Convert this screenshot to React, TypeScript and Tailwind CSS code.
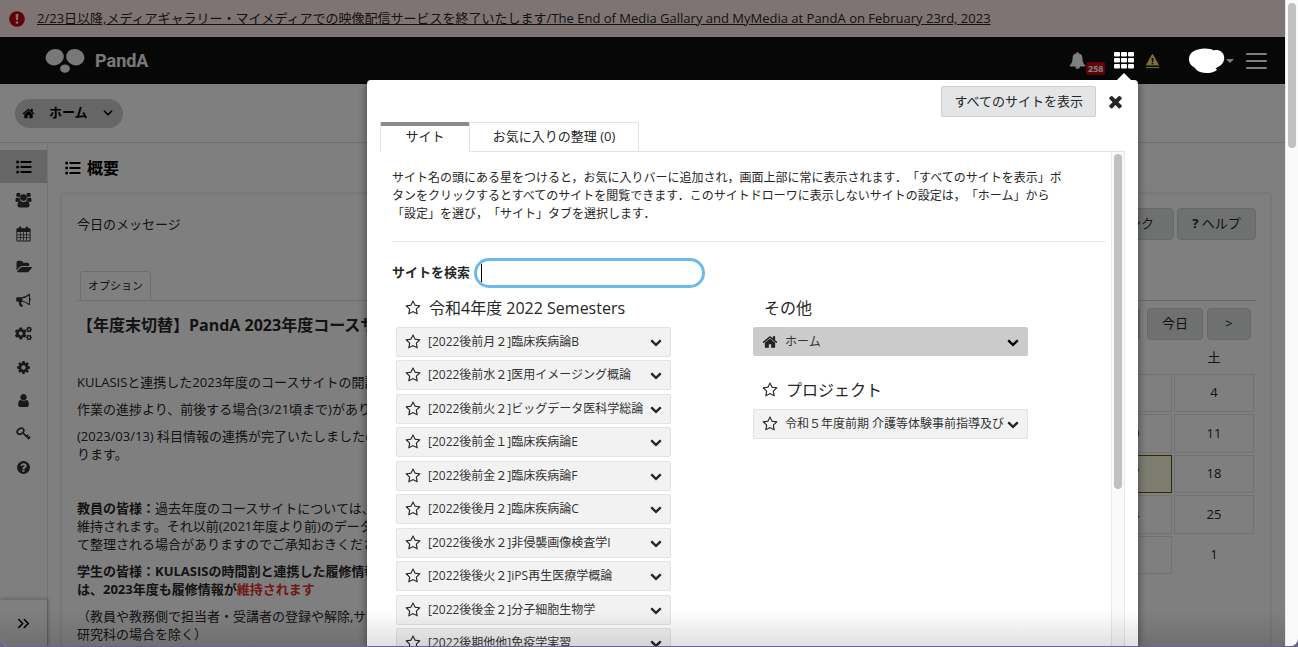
import { useState } from 'react'
import type { ReactNode } from 'react'
import { FaCogs } from 'react-icons/fa'
import { ChevronDown, ChevronsRight } from 'lucide-react'

const PATHS = {
  home: 'M1472 992v480q0 26-19 45t-45 19h-384v-384h-256v384h-384q-26 0-45-19t-19-45v-480q0-1 .5-3t.5-3l575-474 575 474q1 2 1 6zm223-69l-62 74q-8 9-21 11h-3q-13 0-21-7l-692-577-692 577q-12 8-24 7-13-2-21-11l-62-74q-8-10-7-23.5t11-21.5l719-599q32-26 76-26t76 26l244 204v-195q0-14 9-23t23-9h192q14 0 23 9t9 23v408l219 182q10 8 11 21.5t-7 23.5z',
  chevron:
    'M1683 808l-742 741q-19 19-45 19t-45-19l-742-741q-19-19-19-45.5t19-45.5l166-165q19-19 45-19t45 19l531 531 531-531q19-19 45-19t45 19l166 165q19 19 19 45.5t-19 45.5z',
  star: 'M1201 1004l306-297-422-62-189-382-189 382-422 62 306 297-73 421 378-199 377 199zm527-357q0 22-26 48l-363 354 86 500q1 7 1 20 0 50-41 50-19 0-40-12l-449-236-449 236q-22 12-40 12-21 0-31.5-14.5t-10.5-35.5q0-6 2-20l86-500-364-354q-25-27-25-48 0-37 56-46l502-73 225-455q19-41 49-41t49 41l225 455 502 73q56 9 56 46z',
  times:
    'M1490 1322q0 40-28 68l-136 136q-28 28-68 28t-68-28l-294-294-294 294q-28 28-68 28t-68-28l-136-136q-28-28-28-68t28-68l294-294-294-294q-28-28-28-68t28-68l136-136q28-28 68-28t68 28l294 294 294-294q28-28 68-28t68 28l136 136q28 28 28 68t-28 68l-294 294 294 294q28 28 28 68z',
  bell: 'M912 1696q0-16-16-16-59 0-101.5-42.5t-42.5-101.5q0-16-16-16t-16 16q0 73 51.5 124.5t124.5 51.5q16 0 16-16zm816-288q0 52-38 90t-90 38h-448q0 106-75 181t-181 75-181-75-75-181h-448q-52 0-90-38t-38-90q50-42 91-88t85-119.5 74.5-158.5 50-206 19.5-260q0-152 117-282.5t307-158.5q-8-19-8-39 0-40 28-68t68-28 68 28 28 68q0 20-8 39 190 28 307 158.5t117 282.5q0 139 19.5 260t50 206 74.5 158.5 85 119.5 91 88z',
  user: 'M1536 1399q0 109-62.5 187t-150.5 78h-854q-88 0-150.5-78t-62.5-187q0-85 8.5-160.5t31.5-152 58.5-131 94-89 134.5-34.5q131 128 313 128t313-128q76 0 134.5 34.5t94 89 58.5 131 31.5 152 8.5 160.5zm-256-887q0 159-112.5 271.5t-271.5 112.5-271.5-112.5-112.5-271.5 112.5-271.5 271.5-112.5 271.5 112.5 112.5 271.5z',
  cog: 'M1152 896q0-106-75-181t-181-75-181 75-75 181 75 181 181 75 181-75 75-181zm512-109v222q0 12-8 23t-20 13l-185 28q-19 54-39 91 35 50 107 138 10 12 10 25t-9 23q-27 37-99 108t-94 71q-12 0-26-9l-138-108q-44 23-91 38-16 136-29 186-7 28-36 28h-222q-14 0-24.5-8.5t-11.5-21.5l-28-184q-49-16-90-37l-141 107q-10 9-25 9-14 0-25-11-126-114-165-168-7-10-7-23 0-12 8-23 15-21 51-66.5t54-70.5q-27-50-41-99l-183-27q-13-2-21-12.5t-8-23.5v-222q0-12 8-23t19-13l186-28q14-46 39-92-40-57-107-138-10-12-10-24 0-10 9-23 26-36 98.5-107.5t94.5-71.5q13 0 26 10l138 107q44-23 91-38 16-136 29-186 7-28 36-28h222q14 0 24.5 8.5t11.5 21.5l28 184q49 16 90 37l142-107q9-9 24-9 13 0 25 10 129 119 165 170 7 8 7 22 0 12-8 23-15 21-51 66.5t-54 70.5q26 50 41 98l183 28q13 2 21 12.5t8 23.5z',
  question:
    'M1024 1376v-192q0-14-9-23t-23-9h-192q-14 0-23 9t-9 23v192q0 14 9 23t23 9h192q14 0 23-9t9-23zm256-672q0-88-55.5-163t-138.5-116-170-41q-243 0-371 213-15 24 8 42l132 100q7 6 19 6 16 0 25-12 53-68 86-92 34-24 86-24 48 0 85.5 26t37.5 59q0 38-20 61t-68 45q-63 28-115.5 86.5t-52.5 125.5v36q0 14 9 23t23 9h192q14 0 23-9t9-23q0-19 21.5-49.5t54.5-49.5q32-18 49-28.5t46-35 44.5-48 28-60.5 12.5-81zm384 192q0 209-103 385.5t-279.5 279.5-385.5 103-385.5-103-279.5-279.5-103-385.5 103-385.5 279.5-279.5 385.5-103 385.5 103 279.5 279.5 103 385.5z',
  folder:
    'M1943 952q0 31-31 66l-336 396q-43 51-120.5 86.5t-143.5 35.5h-1088q-34 0-60.5-13t-26.5-43q0-31 31-66l336-396q43-51 120.5-86.5t143.5-35.5h1088q34 0 60.5 13t26.5 43zm-343-344v160h-832q-94 0-197 47.5t-164 119.5l-337 396-5 6q0-4-.5-12.5t-.5-12.5v-960q0-92 66-158t158-66h320q92 0 158 66t66 158v32h544q92 0 158 66t66 158z',
}

function Icon({ name, size, className }: { name: keyof typeof PATHS; size: number; className?: string }) {
  return (
    <svg
      width={size}
      height={size}
      viewBox={name === 'folder' ? '0 0 1943 1792' : '0 0 1792 1792'}
      fill="currentColor"
      className={className}
      aria-hidden="true"
    >
      <path d={PATHS[name]} />
    </svg>
  )
}

function ListIcon() {
  return (
    <svg width="16" height="14" viewBox="0 0 16 14" fill="currentColor" aria-hidden="true">
      {[2, 7, 12].map((y) => (
        <g key={y}>
          <circle cx="1.6" cy={y} r="1.5" />
          <rect x="4.5" y={y - 1} width="11" height="2" rx="0.4" />
        </g>
      ))}
    </svg>
  )
}

function UsersIcon() {
  return (
    <svg width="17" height="16" viewBox="0 0 17 16" fill="currentColor" aria-hidden="true">
      <circle cx="3.4" cy="2.9" r="2.2" />
      <circle cx="13.6" cy="2.9" r="2.2" />
      <circle cx="8.5" cy="5.6" r="3.3" />
      <path d="M1.8 5.4q1.6 1 3 .2q-.3 2 .8 3.3q-1.500.1-2.300 1H1.800Q.4 9.900.4 8.600q0-2.800 1.400-3.200zM15.200 5.400q-1.600 1-3 .2q.3 2-.8 3.300q1.500.1 2.300 1h1.500q1.400 0 1.400-1.300q0-2.800-1.400-3.200z" />
      <path d="M5.200 9q3.300 2.300 6.600 0q2.700.3 2.700 4.600q0 2-2 2h-8q-2 0-2-2q0-4.300 2.700-4.600z" />
    </svg>
  )
}

function CalendarIcon() {
  return (
    <svg width="15" height="16" viewBox="0 0 15 16" aria-hidden="true">
      <path
        fill="currentColor"
        fillRule="evenodd"
        d="M1.400 2.200h1.400V1.500Q2.800.4 3.900.4h.3q1.100 0 1.100 1.100v.7h4.400v-.7q0-1.100 1.100-1.100h.3q1.100 0 1.100 1.100v.7h1.400q1 0 1 1v11.200q0 1-1 1H1.400q-1 0-1-1V3.200q0-1 1-1zM1.400 6v8.400h12.200V6z"
      />
      <path d="M4.500 6v8.400M7.500 6v8.400M10.500 6v8.400M1.400 8.800h12.200M1.400 11.600h12.200" stroke="currentColor" strokeWidth="0.8" />
    </svg>
  )
}

function BullhornIcon() {
  return (
    <svg width="15" height="14" viewBox="0 0 15 14" fill="currentColor" aria-hidden="true">
      <path
        fillRule="evenodd"
        d="M14 5.200q.9.300.9 1.200T14 7.600v3.600q0 1-1 1Q9.700 9.200 6 8.800q-1 .4-.7 1.300q-.5.800.8 1.700q.3.500 1 .9q-.7 1.200-2.300.9q-1-.2-1.300-1Q2.500 10.500 3 8.700H1.500Q.2 8.700.2 7.400V5.600q0-1.300 1.300-1.300H5.300Q9.300 4.200 13 .8q1 0 1 1zM12.900 2.400Q9.800 5 6.400 5.300v2.400q3.500.4 6.500 3z"
      />
    </svg>
  )
}

function KeyIcon() {
  return (
    <svg width="15" height="14" viewBox="0 0 15 14" fill="none" stroke="currentColor" aria-hidden="true">
      <ellipse cx="4.500" cy="4.200" rx="3.600" ry="2.600" transform="rotate(-35 4.500 4.200)" strokeWidth="1.700" />
      <path d="M6.500 5.600L13.400 12.200M10.300 9.800l2-2M12.200 11.600l1.900-1.900" strokeWidth="1.800" />
    </svg>
  )
}

const TOOLS: { label: string; icon: ReactNode }[] = [
  { label: '概要', icon: <ListIcon /> },
  { label: '名簿', icon: <UsersIcon /> },
  { label: 'カレンダー', icon: <CalendarIcon /> },
  { label: 'リソース', icon: <Icon name="folder" size={16} /> },
  { label: 'お知らせ', icon: <BullhornIcon /> },
  { label: 'サイトセットアップ', icon: <FaCogs size={17} /> },
  { label: '個人設定', icon: <Icon name="cog" size={15} /> },
  { label: 'アカウント', icon: <Icon name="user" size={15} /> },
  { label: '参加登録', icon: <KeyIcon /> },
  { label: 'ヘルプ', icon: <Icon name="question" size={15} /> },
]

const SITES = [
  '[2022後前月２]臨床疾病論B',
  '[2022後前水２]医用イメージング概論',
  '[2022後前火２]ビッグデータ医科学総論',
  '[2022後前金１]臨床疾病論E',
  '[2022後前金２]臨床疾病論F',
  '[2022後後月２]臨床疾病論C',
  '[2022後後水２]非侵襲画像検査学I',
  '[2022後後火２]iPS再生医療学概論',
  '[2022後後金２]分子細胞生物学',
  '[2022後期他他]免疫学実習',
]

const WEEKS = [
  [3, 4],
  [10, 11],
  [17, 18],
  [24, 25],
  [31, 1],
]

function Header() {
  return (
    <header className="flex h-[47px] shrink-0 items-center bg-[#0e0e0e] pr-[18px] pl-[45px] text-white">
      <a href="#" className="flex items-center gap-[10px]">
        <svg width="40" height="26" viewBox="0 0 40 26" fill="#f0f0f0" aria-hidden="true">
          <ellipse cx="9.700" cy="9.200" rx="9.200" ry="8.100" transform="rotate(-20 9.700 9.200)" />
          <ellipse cx="30.300" cy="9.200" rx="9.200" ry="8.100" transform="rotate(20 30.300 9.200)" />
          <ellipse cx="20" cy="20.600" rx="4.900" ry="4.200" />
        </svg>
        <span className="font-['Roboto',sans-serif] text-lg font-bold text-[#f0f0f0]">PandA</span>
      </a>

      <div className="ml-auto flex h-full items-center">
        <button type="button" aria-label="通知" className="relative mr-7">
          <Icon name="bell" size={17} />
          <span className="absolute top-[10px] left-[17px] rounded-xs bg-[#c4000a] px-[2px] text-[9px] leading-[13px] font-bold">
            258
          </span>
        </button>
        <button type="button" aria-label="サイト一覧" className="relative z-20 mr-3">
          <svg width="20" height="17" viewBox="0 0 20 17" fill="currentColor" aria-hidden="true">
            {[0, 7, 14].map((x) =>
              [0, 6, 12].map((y) => <rect key={`${x}-${y}`} x={x} y={y} width="6" height="4.600" rx="1" />),
            )}
          </svg>
        </button>
        <a href="#" aria-label="警告" className="mr-[30px] text-[#f2dc78]">
          <svg width="13" height="16" viewBox="0 0 13 16" aria-hidden="true">
            <path
              d="M5.700 1.700q.8-1.300 1.600 0l5.400 9.800q.5 1.100-.7 1.100H1q-1.200 0-.7-1.100z"
              fill="currentColor"
            />
            <path d="M5.600 5h1.800l-.3 4H5.900zM5.700 9.800h1.600v1.500H5.700z" fill="#0e0e0e" />
            <path d="M0 14.600h13" stroke="currentColor" />
          </svg>
        </a>
        <button type="button" aria-label="アカウント" className="mr-3 flex items-center gap-px">
          <svg width="36" height="26" viewBox="0 0 36 26" fill="#fff" className="relative z-20" aria-hidden="true">
            <path d="M0 11.500C-.2 6 4 2.500 9 1.500C15-.2 21 .4 25 2.400C30 1.200 34 4 35 8C36 13 33 17 29 19L26.500 20.500Q29.500 22 26 23.200C21 25.800 12 25.800 8 22.600L5.500 19.500C2 18 0 15 0 11.500z" />
          </svg>
          <svg width="8" height="4" viewBox="0 0 8 4" fill="currentColor" aria-hidden="true">
            <path d="M0 0h8L4 4z" />
          </svg>
        </button>
        <button type="button" aria-label="メニュー" className="flex flex-col gap-[5px]">
          <span className="h-[2px] w-[21px] rounded-xs bg-white" />
          <span className="h-[2px] w-[21px] rounded-xs bg-white" />
          <span className="h-[2px] w-[21px] rounded-xs bg-white" />
        </button>
      </div>
    </header>
  )
}

function Sidebar() {
  return (
    <nav className="flex w-12 shrink-0 flex-col border-r border-[#e4e4e4] pt-[7px]">
      <ul className="flex h-[334px] flex-col">
        {TOOLS.map((tool, i) => (
          <li key={tool.label} className="flex-1">
            <a
              href="#"
              aria-label={tool.label}
              className={
                i === 0
                  ? 'flex h-full items-center justify-center bg-[#ccc] text-black'
                  : 'flex h-full items-center justify-center text-[#333]'
              }
            >
              {tool.icon}
            </a>
          </li>
        ))}
      </ul>
      <button
        type="button"
        aria-label="メニューを展開"
        className="mt-auto flex h-[47px] items-center justify-center border-t border-[#ddd] text-black shadow-[1px_0_4px_rgba(0,0,0,0.3)]"
      >
        <ChevronsRight size={19} />
      </button>
    </nav>
  )
}

function Message() {
  return (
    <section className="w-[560px] whitespace-nowrap">
      <h2 className="pt-[21px] text-[13px] leading-[18px]">今日のメッセージ</h2>
      <div className="mt-[38px] flex border-b border-[#ddd] pl-[3px]">
        <a href="#" className="rounded-t border border-b-0 border-[#ddd] px-[7px] text-[11px] leading-[28px]">
          オプション
        </a>
      </div>
      <h3 className="mt-3 text-base leading-6 font-bold">【年度末切替】PandA 2023年度コースサイト</h3>
      <div className="mt-9 flex flex-col gap-[9px] text-[13px] leading-[18px]">
        <p>KULASISと連携した2023年度のコースサイトの開設</p>
        <p>作業の進捗より、前後する場合(3/21頃まで)があります</p>
        <p>
          (2023/03/13) 科目情報の連携が完了いたしましたの
          <br />
          ります。
        </p>
        <p className="mt-[27px]">
          <strong>教員の皆様：</strong>過去年度のコースサイトについては、2
          <br />
          維持されます。それ以前(2021年度より前)のデータに
          <br />
          て整理される場合がありますのでご承知おきくださ
        </p>
        <p className="font-bold">
          学生の皆様：KULASISの時間割と連携した履修情報
          <br />
          は、2023年度も履修情報が<span className="text-[#e0312b]">維持されます</span>
        </p>
        <p>
          （教員や教務側で担当者・受講者の登録や解除,サイ
          <br />
          研究科の場合を除く）
        </p>
      </div>
    </section>
  )
}

const greyButton = 'h-8 rounded border border-[#cfd2d2] bg-[#dfe1e1] text-[13px]'

function Calendar() {
  return (
    <section className="flex w-[180px] flex-col items-end pt-[14px]">
      <div className="flex gap-[3px]">
        <button type="button" className={`${greyButton} w-[79px]`}>
          リンク
        </button>
        <button type="button" className={`${greyButton} w-[79px]`}>
          <b>?</b> ヘルプ
        </button>
      </div>
      <div className="mt-[60px] w-full border-t border-[#d0d0d0] pt-[7px]">
        <div className="flex justify-end gap-1 pr-[5px]">
          <button type="button" className={`${greyButton} w-8`}>
            &lt;
          </button>
          <button type="button" className={`${greyButton} ml-[3px] w-14`}>
            今日
          </button>
          <button type="button" className={`${greyButton} w-11`}>
            &gt;
          </button>
        </div>
      </div>
      <table className="mt-[2px] h-[234px] border-separate border-spacing-[2px] text-center text-[13px]">
        <thead>
          <tr className="h-7">
            <th className="font-normal">金</th>
            <th className="font-normal">土</th>
          </tr>
        </thead>
        <tbody>
          {WEEKS.map(([friday, saturday]) => (
            <tr key={friday}>
              <td
                className={
                  friday === 17
                    ? 'w-20 border border-[#5c5410] bg-[#fafade]'
                    : 'w-20 border border-[#e4e4e4]'
                }
              >
                {friday}
              </td>
              <td className={saturday === 1 ? 'w-20' : 'w-20 border border-[#e4e4e4]'}>{saturday}</td>
            </tr>
          ))}
        </tbody>
      </table>
    </section>
  )
}

function SiteRow({ title, home }: { title: string; home?: boolean }) {
  return (
    <div
      className={
        home
          ? 'flex h-[29px] w-[275px] items-center rounded-xs bg-[#cbcbcb] px-[9px] text-black'
          : 'flex h-[30px] w-[275px] items-center rounded-xs border border-[#e2e2e2] bg-[#f2f2f2] px-2'
      }
    >
      {home ? (
        <Icon name="home" size={16} className="shrink-0 text-[#222]" />
      ) : (
        <button type="button" aria-label="お気に入りに追加">
          <Icon name="star" size={16} />
        </button>
      )}
      <a href="#" className="ml-[7px] flex-1 truncate text-xs leading-[18px] text-[#333]">
        {title}
      </a>
      <button type="button" aria-label="ツールを表示">
        <Icon name="chevron" size={12} />
      </button>
    </div>
  )
}

function SiteDrawer() {
  const [query, setQuery] = useState('')

  return (
    <div
      role="dialog"
      aria-label="サイト"
      className="absolute top-20 right-[147px] bottom-0 z-30 flex w-[771px] flex-col rounded-t bg-white px-[13px] shadow-[0_2px_8px_rgba(0,0,0,0.5)]"
    >
      <svg width="14" height="7" viewBox="0 0 14 7" className="absolute -top-[7px] right-[7px]" aria-hidden="true">
        <path d="M0 7L7 0l7 7z" fill="#fff" />
      </svg>

      <div className="flex items-center justify-end gap-[10px] pt-[6px]">
        <button type="button" className="h-[31px] rounded-xs border border-[#ccd0d2] bg-[#e3e5e6] px-3 text-[13px]">
          すべてのサイトを表示
        </button>
        <button type="button" aria-label="閉じる">
          <Icon name="times" size={19} />
        </button>
      </div>

      <div role="tablist" className="mt-[5px] flex h-[30px] shrink-0 text-[13px]">
        <button
          type="button"
          role="tab"
          aria-selected="true"
          className="w-[90px] rounded-t-xs border-x border-t-4 border-x-[#e2e2e2] border-t-[#8b8b8b] pb-1"
        >
          サイト
        </button>
        <button
          type="button"
          role="tab"
          aria-selected="false"
          className="w-[169px] rounded-tr-xs border-t border-r border-b border-[#e2e2e2]"
        >
          お気に入りの整理 (0)
        </button>
        <span className="flex-1 border-b border-[#e2e2e2]" />
      </div>

      <div className="flex min-h-0 flex-1">
        <div className="min-w-0 flex-1 overflow-hidden pr-[5px] pl-3">
          <p className="border-b border-[#e6e6e6] pt-[17px] pb-[18px] text-xs leading-[18px] whitespace-nowrap [text-spacing-trim:space-all]">
            サイト名の頭にある星をつけると，お気に入りバーに追加され，画面上部に常に表示されます．「すべてのサイトを表示」ボ
            <br />
            タンをクリックするとすべてのサイトを閲覧できます．このサイトドローワに表示しないサイトの設定は，「ホーム」から
            <br />
            「設定」を選び，「サイト」タブを選択します．
          </p>

          <div className="mt-4 flex items-center gap-1">
            <label htmlFor="site-search" className="text-[13px] font-bold">
              サイトを検索
            </label>
            <div className="relative">
              <input
                id="site-search"
                type="text"
                value={query}
                onChange={(e) => setQuery(e.target.value)}
                className="block h-[30px] w-[231px] rounded-full border-3 border-[#6cb9ec] px-2 text-[13px] outline-none"
              />
              <span className="absolute top-[6px] left-[7px] h-[18px] w-px bg-black" />
            </div>
          </div>

          <div className="grid grid-cols-2 gap-x-1 pl-1">
            <section>
              <h4 className="flex h-[39px] items-center gap-2 pl-[9px] text-base">
                <Icon name="star" size={16} />
                令和4年度 2022 Semesters
              </h4>
              <div className="grid h-[331px] content-between">
                {SITES.map((site) => (
                  <SiteRow key={site} title={site} />
                ))}
              </div>
            </section>
            <section>
              <h4 className="flex h-[39px] items-center pl-[11px] text-base">その他</h4>
              <SiteRow title="ホーム" home />
              <h4 className="mt-[14px] flex h-[39px] items-center gap-2 pl-[9px] text-base">
                <Icon name="star" size={16} />
                プロジェクト
              </h4>
              <SiteRow title="令和５年度前期 介護等体験事前指導及び" />
            </section>
          </div>
        </div>
        <div className="w-[14px] border-x border-[#e8e8e8] bg-[#fafafa] px-[2px] pt-[2px]">
          <div className="h-[335px] w-2 rounded-full bg-[#c1c1c1]" />
        </div>
      </div>
    </div>
  )
}

export default function App() {
  return (
    <div className="h-screen bg-[#6b6489] pb-px font-['Open_Sans','Noto_Sans_CJK_JP',sans-serif] text-[#262626]">
      <div className="flex h-full overflow-hidden rounded-b-lg bg-white">
        <div className="relative flex min-w-0 flex-1 flex-col overflow-hidden">
          <div className="flex h-[37px] shrink-0 items-center gap-3 bg-[#ffe8e8] pl-[9px]">
            <svg width="16" height="16" viewBox="0 0 16 16" aria-hidden="true">
              <circle cx="8" cy="8" r="7.800" fill="#c2000b" />
              <path d="M6.600 3h2.800l-.4 6H7zM6.800 10.300h2.400v2.400H6.800z" fill="#ffe8e8" />
            </svg>
            <a href="#" className="text-[13px] whitespace-nowrap underline">
              2/23日以降,メディアギャラリー・マイメディアでの映像配信サービスを終了いたします/The End of Media Gallary and MyMedia at
              PandA on February 23rd, 2023
            </a>
          </div>

          <Header />

          <div className="flex h-[59px] shrink-0 items-center border-b border-[#ddd] pl-[15px]">
            <button
              type="button"
              className="flex h-[29px] items-center rounded-full bg-[#ccc] pr-2 pl-[7px] text-[13px] font-bold text-black"
            >
              <Icon name="home" size={13} />
              <span className="mr-[13px] ml-[14px]">ホーム</span>
              <ChevronDown size={14} strokeWidth={3} />
            </button>
          </div>

          <div className="flex min-h-0 flex-1">
            <Sidebar />
            <main className="flex min-w-0 flex-1 flex-col overflow-hidden pr-[14px] pl-[13px]">
              <h1 className="flex h-[50px] shrink-0 items-center gap-[6px] pl-1 text-base font-bold text-black">
                <ListIcon />
                概要
              </h1>
              <div className="flex flex-1 justify-between rounded-xs border border-b-0 border-[#eee] pr-[14px] pl-[15px] shadow-[0_0_3px_rgba(0,0,0,0.15)]">
                <Message />
                <Calendar />
              </div>
            </main>
          </div>

          <div className="absolute inset-0 z-10 bg-black/50" />
          <SiteDrawer />
          <div className="pointer-events-none absolute inset-x-0 bottom-0 z-40 h-9 bg-linear-to-t from-black/12 to-transparent" />
        </div>

        <div className="w-[13px] border-l border-[#e8e8e8] bg-[#fafafa] px-[2px] pt-[3px]">
          <div className="h-[145px] w-2 rounded-full bg-[#c1c1c1]" />
        </div>
      </div>
    </div>
  )
}
